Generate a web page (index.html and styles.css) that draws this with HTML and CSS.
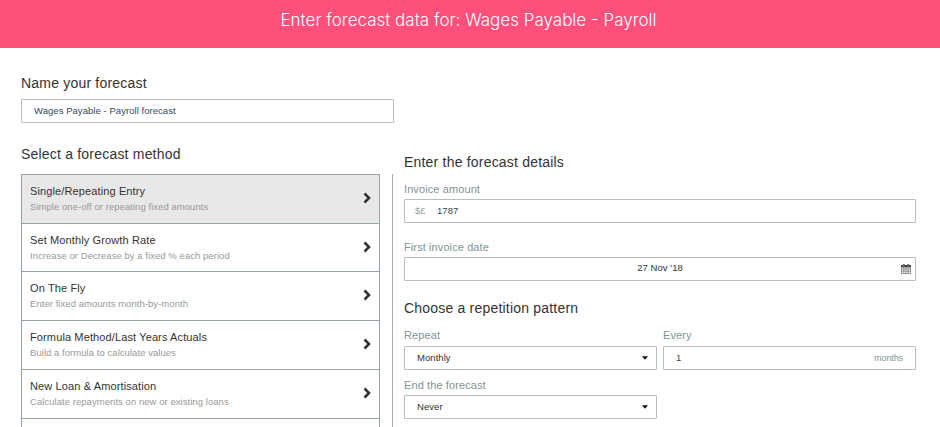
FILE: index.html
```html
<!DOCTYPE html>
<html lang="en">
<head>
    <meta charset="UTF-8">
    <meta name="viewport" content="width=device-width, initial-scale=1.0">
    <title>Enter forecast data</title>
    <link rel="stylesheet" href="styles.css">
</head>
<body>
    <svg class="sprite" width="0" height="0">
        <symbol id="chevron" viewBox="0 0 8 12">
            <path d="M1.5 1.5 L6 6 L1.5 10.5" fill="none" stroke="#333" stroke-width="2.6"/>
        </symbol>
        <symbol id="caret" viewBox="0 0 6 4">
            <path d="M0 0.2 H6 L3 3.8 Z" fill="#111"/>
        </symbol>
    </svg>

    <header class="header">
        <h1 class="header-title">Enter forecast data for: Wages Payable - Payroll</h1>
    </header>

    <main class="content">
        <div class="left">
            <h2>Name your forecast</h2>
            <div class="field name-field"><span class="value">Wages Payable - Payroll forecast</span></div>

            <h2 class="method-heading">Select a forecast method</h2>
            <ul class="methods">
                <li class="method active">
                    <div><h3>Single/Repeating Entry</h3><p>Simple one-off or repeating fixed amounts</p></div>
                    <svg class="chevron"><use href="#chevron"/></svg>
                </li>
                <li class="method">
                    <div><h3>Set Monthly Growth Rate</h3><p>Increase or Decrease by a fixed % each period</p></div>
                    <svg class="chevron"><use href="#chevron"/></svg>
                </li>
                <li class="method">
                    <div><h3>On The Fly</h3><p>Enter fixed amounts month-by-month</p></div>
                    <svg class="chevron"><use href="#chevron"/></svg>
                </li>
                <li class="method">
                    <div><h3>Formula Method/Last Years Actuals</h3><p>Build a formula to calculate values</p></div>
                    <svg class="chevron"><use href="#chevron"/></svg>
                </li>
                <li class="method">
                    <div><h3>New Loan &amp; Amortisation</h3><p>Calculate repayments on new or existing loans</p></div>
                    <svg class="chevron"><use href="#chevron"/></svg>
                </li>
                <li class="method"></li>
            </ul>
        </div>

        <div class="right">
            <h2>Enter the forecast details</h2>
            <label>Invoice amount</label>
            <div class="field amount"><span class="prefix">$£</span><span class="value">1787</span></div>

            <label class="date-label">First invoice date</label>
            <div class="field date">
                <span class="date-value">27 Nov '18</span>
                <svg class="calendar" viewBox="0 0 10 10">
                    <path d="M0.5 2.5 V9.5 H9.5 V2.5 M0.5 5 H9.5 M0.5 7.2 H9.5 M2.8 3 V9.5 M5 3 V9.5 M7.2 3 V9.5" fill="none" stroke="#555" stroke-width="0.6"/>
                    <path d="M0 1 H10 V3.3 H0 Z" fill="#444"/>
                    <path d="M2.7 0 V2.2 M7.3 0 V2.2" stroke="#444" stroke-width="1.8"/>
                    <path d="M2.7 0.5 V2.1 M7.3 0.5 V2.1" stroke="#ddd" stroke-width="0.6"/>
                </svg>
            </div>

            <h2 class="pattern-heading">Choose a repetition pattern</h2>
            <div class="grid">
                <div>
                    <label>Repeat</label>
                    <div class="field select"><span>Monthly</span><svg class="caret"><use href="#caret"/></svg></div>
                </div>
                <div>
                    <label>Every</label>
                    <div class="field every"><span class="value">1</span><span class="suffix">months</span></div>
                </div>
                <div>
                    <label>End the forecast</label>
                    <div class="field select"><span>Never</span><svg class="caret"><use href="#caret"/></svg></div>
                </div>
            </div>
        </div>
    </main>
</body>
</html>
```
FILE: styles.css
```css
* {
    box-sizing: border-box;
}
body {
    margin: 0;
    background: #fff;
    color: #333;
    font-family: "Liberation Sans", Arial, sans-serif;
    font-size: 9.5px;
}
h1, h2, h3, p, ul {
    margin: 0;
    padding: 0;
    font-weight: normal;
}
.sprite {
    display: block;
}
.header {
    height: 48px;
    padding-right: 3px;
    background: #ff4f7b;
    color: #fff;
    text-align: center;
}
.header-title {
    font-family: Inter, "Liberation Sans", sans-serif;
    font-size: 17px;
    font-weight: 300;
    line-height: 40px;
}
.content {
    display: flex;
    height: 379px;
    padding: 0 24px 0 21px;
    overflow: hidden;
}
.left {
    width: 373px;
    padding-top: 25px;
}
h2 {
    font-size: 14px;
    line-height: 20px;
    letter-spacing: 0.2px;
}
.field {
    display: flex;
    align-items: center;
    height: 24px;
    padding: 0 12px;
    border: 1px solid #b5bec1;
    border-radius: 1px;
    letter-spacing: 0.05px;
}
.value {
    color: #34495e;
}
.name-field {
    margin-top: 6px;
    padding-bottom: 2px;
}
.method-heading {
    margin-top: 21px;
}
.methods {
    width: 372px;
    height: 253px;
    margin-top: 10px;
    padding-right: 13px;
    border-right: 1px solid #a3acac;
    list-style: none;
    overflow: hidden;
}
.method {
    display: flex;
    justify-content: space-between;
    align-items: center;
    width: 359px;
    height: 49px;
    padding: 0 8px 1px;
    border: 1px solid #95a5a6;
    border-bottom: 0;
}
.method:nth-child(2) {
    height: 48px;
}
.method.active {
    background: #e8e8e8;
}
h3 {
    font-size: 11px;
    line-height: 16px;
    letter-spacing: 0.12px;
}
p {
    color: #999;
    line-height: 15px;
    letter-spacing: 0.05px;
}
.chevron {
    width: 8px;
    height: 12px;
    margin-bottom: 1px;
}
.right {
    width: 512px;
    margin-left: 10px;
    padding-top: 104px;
}
label {
    display: block;
    color: #7f9393;
    font-size: 11px;
    line-height: 16px;
    letter-spacing: 0.1px;
}
.right h2 + label {
    margin-top: 9px;
}
.amount {
    margin-top: 2px;
    padding: 0 12px 2px 10px;
}
.prefix {
    width: 22px;
    color: #95a5a6;
}
.date-label {
    margin-top: 16px;
}
.date {
    margin-top: 2px;
    padding: 0 4px 0 0;
}
.date-value {
    flex: 1;
    padding: 0 0 3px 14px;
    text-align: center;
}
.calendar {
    width: 10px;
    height: 10px;
}
.pattern-heading {
    margin-top: 17px;
}
.grid {
    display: grid;
    grid-template-columns: 253px 253px;
    gap: 7px 6px;
    margin-top: 9px;
}
.grid .field {
    margin-top: 3px;
}
.grid label {
    height: 15px;
}
.grid > :nth-child(-n+2) label {
    height: 16px;
}
.select, .every {
    justify-content: space-between;
}
.select {
    padding-right: 8px;
}
.select span {
    padding-bottom: 2px;
}
.every .value {
    padding-bottom: 1px;
}
.caret {
    width: 6px;
    height: 4px;
}
.suffix {
    color: #7f9393;
    font-size: 9px;
    letter-spacing: -0.1px;
}
```
